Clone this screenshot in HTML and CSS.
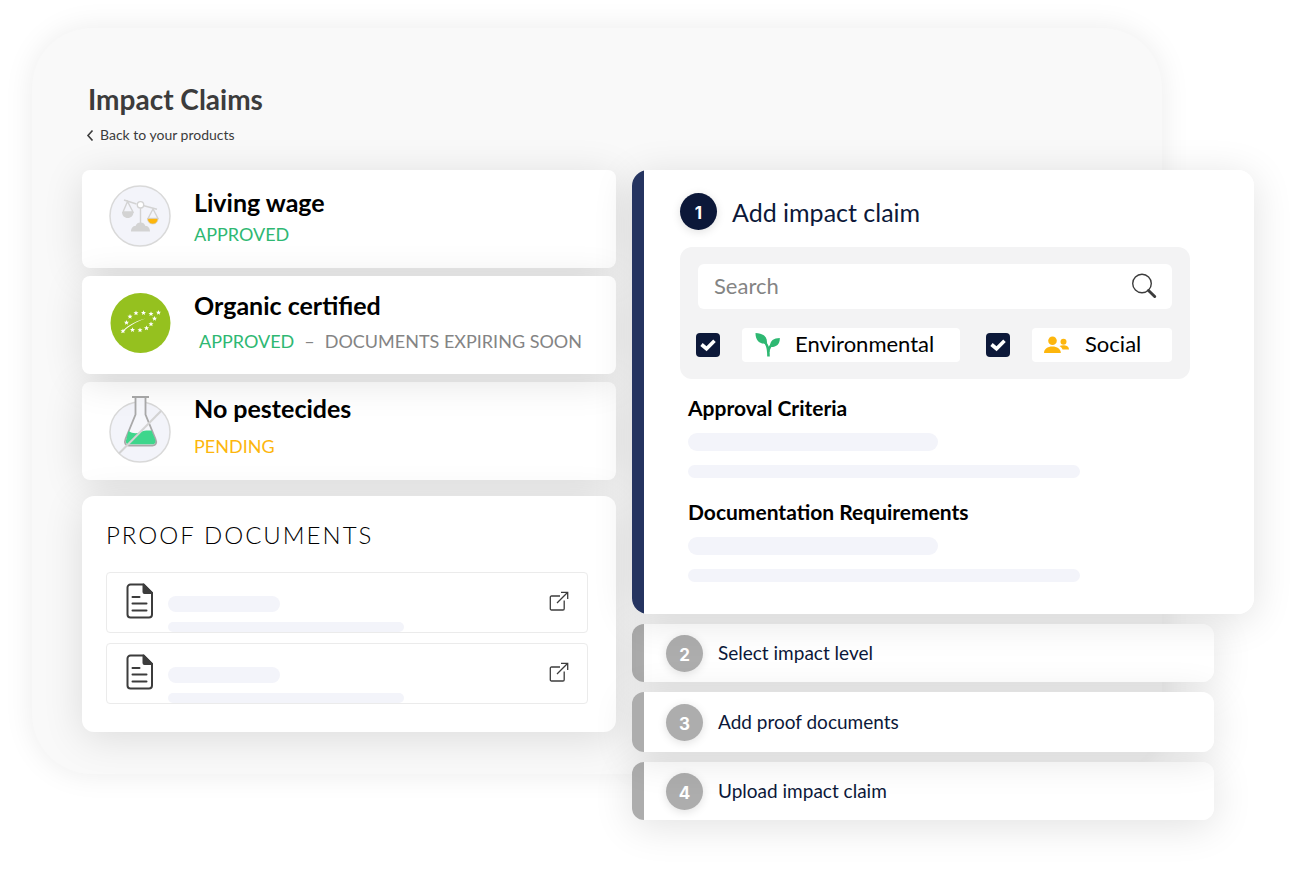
FILE: index.html
```html
<!DOCTYPE html>
<html lang="en">
<head>
    <meta charset="UTF-8">
    <meta name="viewport" content="width=device-width, initial-scale=1.0">
    <title>Impact Claims</title>
    <link rel="stylesheet" href="styles.css">
</head>
<body>
    <div class="stage">
        <div class="backdrop"></div>

        <div class="content">
            <header class="page-header">
                <h1>Impact Claims</h1>
                <a class="back-link" href="#">
                    <svg width="8" height="12" viewBox="0 0 8 12" fill="none" stroke="#3c3c3c" stroke-width="1.6"><path d="M6.500 1.500L2 6.500l4.500 5"/></svg>
                    Back to your products
                </a>
            </header>

            <main class="columns">
                <div class="left-column">
                    <section class="claims">
                        <article class="claim claim-wage">
                            <svg class="claim-icon" viewBox="0 0 62 76">
                                <circle cx="31" cy="38" r="30" fill="#f3f4fa" stroke="#d9d9d9" stroke-width="1.500"/>
                                <g fill="none" stroke="#d3d3d3" stroke-width="1.400">
                                    <path d="M15 22l12.500 4M34 27.500l14 3.800M31.500 30v20"/>
                                    <circle cx="31.500" cy="26.800" r="3.200" fill="#fff"/>
                                    <path d="M18.500 23.500L14 34h10zM44 31l-5 9.500h10z"/>
                                </g>
                                <path d="M13 34h11.500c0 3.800-2.400 6-5.700 6S13 37.800 13 34zM22 53.500c0-3.500 2-5.500 4.500-5.500 1-2.500 2.500-3.500 5-3.500s4 1 5 3.500c2.500 0 4.500 2 4.500 5.500z" fill="#d3d3d3"/>
                                <path d="M38.500 40.500h10.500c0 3.500-2.200 5.500-5.200 5.500s-5.300-2-5.300-5.500z" fill="#fdb60d" stroke="#d3d3d3" stroke-width=".7"/>
                            </svg>
                            <div class="claim-text">
                                <h2>Living wage</h2>
                                <p class="approved">APPROVED</p>
                            </div>
                        </article>
                        <article class="claim claim-organic">
                            <svg class="claim-icon" viewBox="0 0 62 76">
                                <defs>
                                    <path id="star" d="M0-2.600L.7-.8 2.500-.8 1.100.4 1.600 2.200 0 1.200-1.600 2.200-1.100.4-2.500-.8-.7-.8z" fill="#fff"/>
                                </defs>
                                <circle cx="31.500" cy="38" r="30" fill="#95c11f"/>
                                <path d="M12 48c5-6.500 12-11 24.500-14.500C27 37 19 41.500 14 47z" fill="#fff"/>
                                <use href="#star" x="14" y="46"/>
                                <use href="#star" x="17.500" y="37.500"/>
                                <use href="#star" x="21" y="31.500"/>
                                <use href="#star" x="27" y="28"/>
                                <use href="#star" x="34.500" y="27.800"/>
                                <use href="#star" x="42" y="28.800"/>
                                <use href="#star" x="49.500" y="27.500"/>
                                <use href="#star" x="45.500" y="33.500"/>
                                <use href="#star" x="42" y="39"/>
                                <use href="#star" x="37.500" y="43"/>
                                <use href="#star" x="31" y="45"/>
                                <use href="#star" x="23.500" y="44.800"/>
                            </svg>
                            <div class="claim-text">
                                <h2>Organic certified</h2>
                                <p class="status-list"><span class="approved">APPROVED</span><span>–</span><span>DOCUMENTS EXPIRING SOON</span></p>
                            </div>
                        </article>
                        <article class="claim claim-pesticides">
                            <svg class="claim-icon" viewBox="0 0 62 76">
                                <circle cx="31" cy="38" r="30" fill="#f3f4fa" stroke="#d9d9d9" stroke-width="1.500"/>
                                <path d="M26.500 3v17.500L16.500 45c-1.500 4 0 6.500 3.500 6.500h23.500c3.500 0 4.500-3 3-6.500L36.500 20.500V3z" fill="#f6f7fb" stroke="#a9a9a9" stroke-width="1.800"/>
                                <path d="M19.500 37c4 2.500 8 3 12 1s8-1.500 11-1.500l3.500 8.500c1.200 3.500 0 5.300-2.500 5.300H20c-2.500 0-3.800-2-2.700-5z" fill="#3ed68c"/>
                                <path d="M23 3h17" stroke="#a9a9a9" stroke-width="2"/>
                                <path d="M10 59.500L52 17" stroke="#d3d3d3" stroke-width="2"/>
                            </svg>
                            <div class="claim-text">
                                <h2>No pestecides</h2>
                                <p class="pending">PENDING</p>
                            </div>
                        </article>
                    </section>

                    <section class="documents">
                        <h2>PROOF DOCUMENTS</h2>
                        <ul>
                            <li class="document">
                                <svg class="file-icon" viewBox="0 0 28 36" fill="none" stroke="#3c3c3c" stroke-width="2" stroke-linecap="round" stroke-linejoin="round">
                                    <path d="M4.500 1.500h13L26 10v21.500a3 3 0 0 1-3 3H4.500a3 3 0 0 1-3-3v-27a3 3 0 0 1 3-3z"/>
                                    <path d="M17.500 1.500V9a1 1 0 0 0 1 1H26z" fill="#3c3c3c"/>
                                    <path d="M6.500 14h7M6.500 20.500h14M6.500 27.500h14"/>
                                </svg>
                                <div class="lines"><span class="line"></span><span class="line line-long"></span></div>
                                <a class="open-link" href="#" aria-label="Open document">
                                    <svg width="20" height="20" viewBox="0 0 20 20" fill="none" stroke="#3c3c3c" stroke-width="1.300"><path d="M11 5H2.500A1.200 1.200 0 0 0 1.300 6.200v11.500A1.200 1.200 0 0 0 2.500 19h11.500a1.200 1.200 0 0 0 1.200-1.200V9.500M8 12L18.500 1.500M12 1.300h6.700V8"/></svg>
                                </a>
                            </li>
                            <li class="document">
                                <svg class="file-icon" viewBox="0 0 28 36" fill="none" stroke="#3c3c3c" stroke-width="2" stroke-linecap="round" stroke-linejoin="round">
                                    <path d="M4.500 1.500h13L26 10v21.500a3 3 0 0 1-3 3H4.500a3 3 0 0 1-3-3v-27a3 3 0 0 1 3-3z"/>
                                    <path d="M17.500 1.500V9a1 1 0 0 0 1 1H26z" fill="#3c3c3c"/>
                                    <path d="M6.500 14h7M6.500 20.500h14M6.500 27.500h14"/>
                                </svg>
                                <div class="lines"><span class="line"></span><span class="line line-long"></span></div>
                                <a class="open-link" href="#" aria-label="Open document">
                                    <svg width="20" height="20" viewBox="0 0 20 20" fill="none" stroke="#3c3c3c" stroke-width="1.300"><path d="M11 5H2.500A1.200 1.200 0 0 0 1.300 6.200v11.500A1.200 1.200 0 0 0 2.500 19h11.500a1.200 1.200 0 0 0 1.200-1.200V9.500M8 12L18.500 1.500M12 1.300h6.700V8"/></svg>
                                </a>
                            </li>
                        </ul>
                    </section>
                </div>

                <div class="steps">
                    <section class="step step-open">
                        <div class="step-title">
                            <span class="number">1</span>
                            <h2>Add impact claim</h2>
                        </div>
                        <form class="filters">
                            <div class="search">
                                <input type="search" placeholder="Search" aria-label="Search">
                                <button type="button" aria-label="Search">
                                    <svg width="26" height="26" viewBox="0 0 26 26" fill="none" stroke="#3c3c3c"><circle cx="11" cy="10.500" r="9.300" stroke-width="1.400"/><path d="M17.500 17.500l6.200 6" stroke-width="3" stroke-linecap="round"/></svg>
                                </button>
                            </div>
                            <div class="options">
                                <label class="option option-wide">
                                    <input type="checkbox" checked>
                                    <span class="chip">
                                        <svg width="26" height="24" viewBox="0 0 26 24" fill="#2eb872"><path d="M1.500 0c7 .3 12 3 11.500 10.500C6 11.500 1.500 8 1.500 0zM25.800 5c.3 6-3.500 9.500-9.800 9-.3-6 3.500-9 9.800-9z"/><path d="M8.500 7c4 3 6 6.500 6 16.500M20 10c-4 2.500-5.500 5-5.500 9" fill="none" stroke="#2eb872" stroke-width="2.600"/></svg>
                                        Environmental
                                    </span>
                                </label>
                                <label class="option">
                                    <input type="checkbox" checked>
                                    <span class="chip">
                                        <svg width="26" height="18" viewBox="0 0 26 18" fill="#fdb60d"><circle cx="8.500" cy="4.800" r="4.300"/><path d="M0 17c0-4 3.500-6.500 8.300-6.500s8.500 2.500 8.500 6.500z"/><circle cx="19.500" cy="5.800" r="3"/><path d="M15.500 10c4-1.500 9.500-.5 9.500 3.500h-6.500c-.5-1.500-1.500-2.700-3-3.500z"/></svg>
                                        Social
                                    </span>
                                </label>
                            </div>
                        </form>
                        <div class="details">
                            <h3>Approval Criteria</h3>
                            <span class="bar"></span>
                            <span class="bar bar-long"></span>
                            <h3>Documentation Requirements</h3>
                            <span class="bar"></span>
                            <span class="bar bar-long"></span>
                        </div>
                    </section>
                    <section class="step"><span class="number">2</span><h2>Select impact level</h2></section>
                    <section class="step step-raised"><span class="number">3</span><h2>Add proof documents</h2></section>
                    <section class="step"><span class="number">4</span><h2>Upload impact claim</h2></section>
                </div>
            </main>
        </div>
    </div>
</body>
</html>
```
FILE: styles.css
```css
* {
    box-sizing: border-box;
}
body {
    margin: 0;
    background: white;
    font-family: Lato, "Liberation Sans", sans-serif;
    color: black;
}
h1, h2, h3, p, ul {
    margin: 0;
    padding: 0;
}
svg {
    display: block;
    flex: none;
}

/* the grey sheet and the content share one grid cell, the content hangs over its edge */
.stage {
    display: grid;
    padding: 28px 52px 60px 32px;
}
.backdrop {
    grid-area: 1 / 1;
    margin: 0 92px 46px 0;
    background: #f9f9f9;
    border-radius: 60px;
    box-shadow: 0 0 30px rgba(0, 0, 0, 0.08);
}
.content {
    grid-area: 1 / 1;
    padding: 53px 0 0 50px;
}
.page-header {
    padding: 0 6px 25px;
    color: #3c3c3c;
}
h1 {
    font-size: 28px;
    line-height: 36px;
    font-weight: bold;
}
.back-link {
    display: flex;
    align-items: center;
    gap: 6px;
    width: max-content;
    margin-top: 8px;
    margin-left: -2px;
    font-size: 14px;
    line-height: 20px;
    color: #3c3c3c;
    text-decoration: none;
}
.columns {
    display: grid;
    grid-template-columns: 534fr 622fr;
    gap: 16px;
    align-items: start;
}
.left-column {
    display: flex;
    flex-direction: column;
    gap: 16px;
}

/* claims */
.claims {
    display: flex;
    flex-direction: column;
    gap: 8px;
}
.claim {
    display: flex;
    gap: 23px;
    min-height: 98px;
    padding: 8px 27px;
    background: white;
    border-radius: 8px;
    box-shadow: 0 6px 40px rgba(0, 0, 0, 0.12);
}
.claim-icon {
    width: 62px;
    height: 76px;
}
.claim-text {
    display: flex;
    flex-direction: column;
    gap: 4px;
    padding-top: 8px;
}
.claim h2 {
    font-size: 25px;
    line-height: 32px;
    font-weight: bold;
}
.claim p {
    font-size: 18px;
    line-height: 24px;
}
.claim-organic {
    position: relative;
    z-index: 1;
    padding-top: 9px;
}
.claim-organic .claim-text {
    gap: 8px;
    padding-top: 4px;
}
.claim-pesticides {
    padding-top: 12px;
}
.claim-pesticides .claim-text {
    gap: 10px;
    padding-top: 0;
    margin-top: -2px;
}
.status-list {
    display: flex;
    gap: 10px;
    padding-left: 5px;
    color: #848484;
    white-space: nowrap;
}
.approved {
    color: #2eb872;
}
.pending {
    color: #fdb60d;
}

/* proof documents */
.documents {
    position: relative;
    z-index: 1;
    padding: 23px 28px 28px 24px;
    background: white;
    border-radius: 12px;
    box-shadow: 0 6px 40px rgba(0, 0, 0, 0.12);
}
.documents h2 {
    margin-bottom: 21px;
    font-size: 24px;
    line-height: 32px;
    font-weight: 300;
    letter-spacing: 2px;
}
.documents ul {
    display: flex;
    flex-direction: column;
    gap: 10px;
    list-style: none;
}
.document {
    display: flex;
    gap: 14px;
    height: 61px;
    padding: 0 18px 0 19px;
    border: 1px solid #ebebeb;
    border-radius: 4px;
}
.file-icon {
    width: 28px;
    height: 36px;
    margin-top: 10px;
}
.lines {
    display: flex;
    flex: 1;
    flex-direction: column;
    gap: 10px;
    padding-top: 23px;
}
.line {
    width: 112px;
    height: 16px;
    background: #f3f4fa;
    border-radius: 8px;
}
.line-long {
    width: 236px;
    height: 10px;
}
.open-link {
    margin-top: 18px;
}

/* steps */
.steps {
    display: flex;
    flex-direction: column;
    gap: 10px;
}
.step {
    display: flex;
    align-items: center;
    gap: 15px;
    min-height: 58px;
    margin-right: 40px;
    padding-left: 34px;
    background: linear-gradient(to right, #adadad 12px, white 12px);
    border-radius: 12px;
    box-shadow: 0 6px 40px rgba(0, 0, 0, 0.12);
    color: #0c1839;
}
.step h2 {
    font-size: 19px;
    line-height: 28px;
    font-weight: normal;
}
.number {
    display: flex;
    align-items: center;
    justify-content: center;
    flex: none;
    width: 37px;
    height: 37px;
    padding-top: 3px;
    background: #adadad;
    border-radius: 50%;
    box-shadow: 0 2px 10px rgba(0, 0, 0, 0.12);
    color: white;
    font-family: Inter, "Noto Sans", sans-serif;
    font-size: 17px;
    font-weight: bold;
}
.step-raised {
    position: relative;
    z-index: 1;
    min-height: 60px;
}
.step-open {
    position: relative;
    z-index: 1;
    display: block;
    margin-right: 0;
    padding: 23px 64px 32px 48px;
    background: linear-gradient(to right, #253460 12px, white 12px);
    border-radius: 16px;
}
.step-title {
    display: flex;
    align-items: center;
    gap: 15px;
    margin-bottom: 17px;
}
.step-title h2 {
    font-size: 25px;
    line-height: 36px;
}
.step-title .number {
    background: #0c1839;
}
.filters {
    padding: 17px 18px 17px 16px;
    background: #f3f3f4;
    border-radius: 12px;
}
.search {
    display: flex;
    align-items: center;
    height: 45px;
    margin-left: 2px;
    padding: 0 15px 2px 16px;
    background: white;
    border-radius: 6px;
}
.search input {
    flex: 1;
    min-width: 0;
    padding: 0;
    border: none;
    outline: none;
    background: none;
    font-family: inherit;
    font-size: 22px;
}
.search input::placeholder {
    color: #848484;
}
.search button {
    padding: 0;
    border: none;
    background: none;
    cursor: pointer;
}
.options {
    display: flex;
    gap: 26px;
    margin-top: 19px;
}
.option {
    display: flex;
    flex: 186;
    align-items: center;
    gap: 22px;
}
.option-wide {
    flex: 264;
}
.option input {
    appearance: none;
    flex: none;
    width: 24px;
    height: 24px;
    margin: 0;
    background: #0c1839;
    border-radius: 4px;
}
.option input:checked {
    background-image: url("data:image/svg+xml,%3Csvg xmlns='http://www.w3.org/2000/svg' viewBox='0 0 24 24'%3E%3Cpath d='M5.500 11.500l5 4.200 8-8' fill='none' stroke='white' stroke-width='3.600'/%3E%3C/svg%3E");
}
.chip {
    display: flex;
    flex: 1;
    align-items: center;
    gap: 15px;
    height: 34px;
    padding: 0 0 2px 12px;
    background: white;
    border-radius: 4px;
    color: black;
    font-size: 22px;
    line-height: 28px;
}
.chip svg {
    margin-top: 2px;
}
.details {
    display: flex;
    flex-direction: column;
    padding: 15px 0 0 8px;
}
.details h3 {
    color: black;
    font-size: 21px;
    line-height: 28px;
}
.bar {
    width: 250px;
    height: 18px;
    margin: 11px 0 14px;
    background: #f3f4fa;
    border-radius: 9px;
}
.bar-long {
    width: 392px;
    max-width: 100%;
    height: 13px;
    margin: 0 0 20px;
}
.bar-long:last-child {
    margin-bottom: 0;
}
```
